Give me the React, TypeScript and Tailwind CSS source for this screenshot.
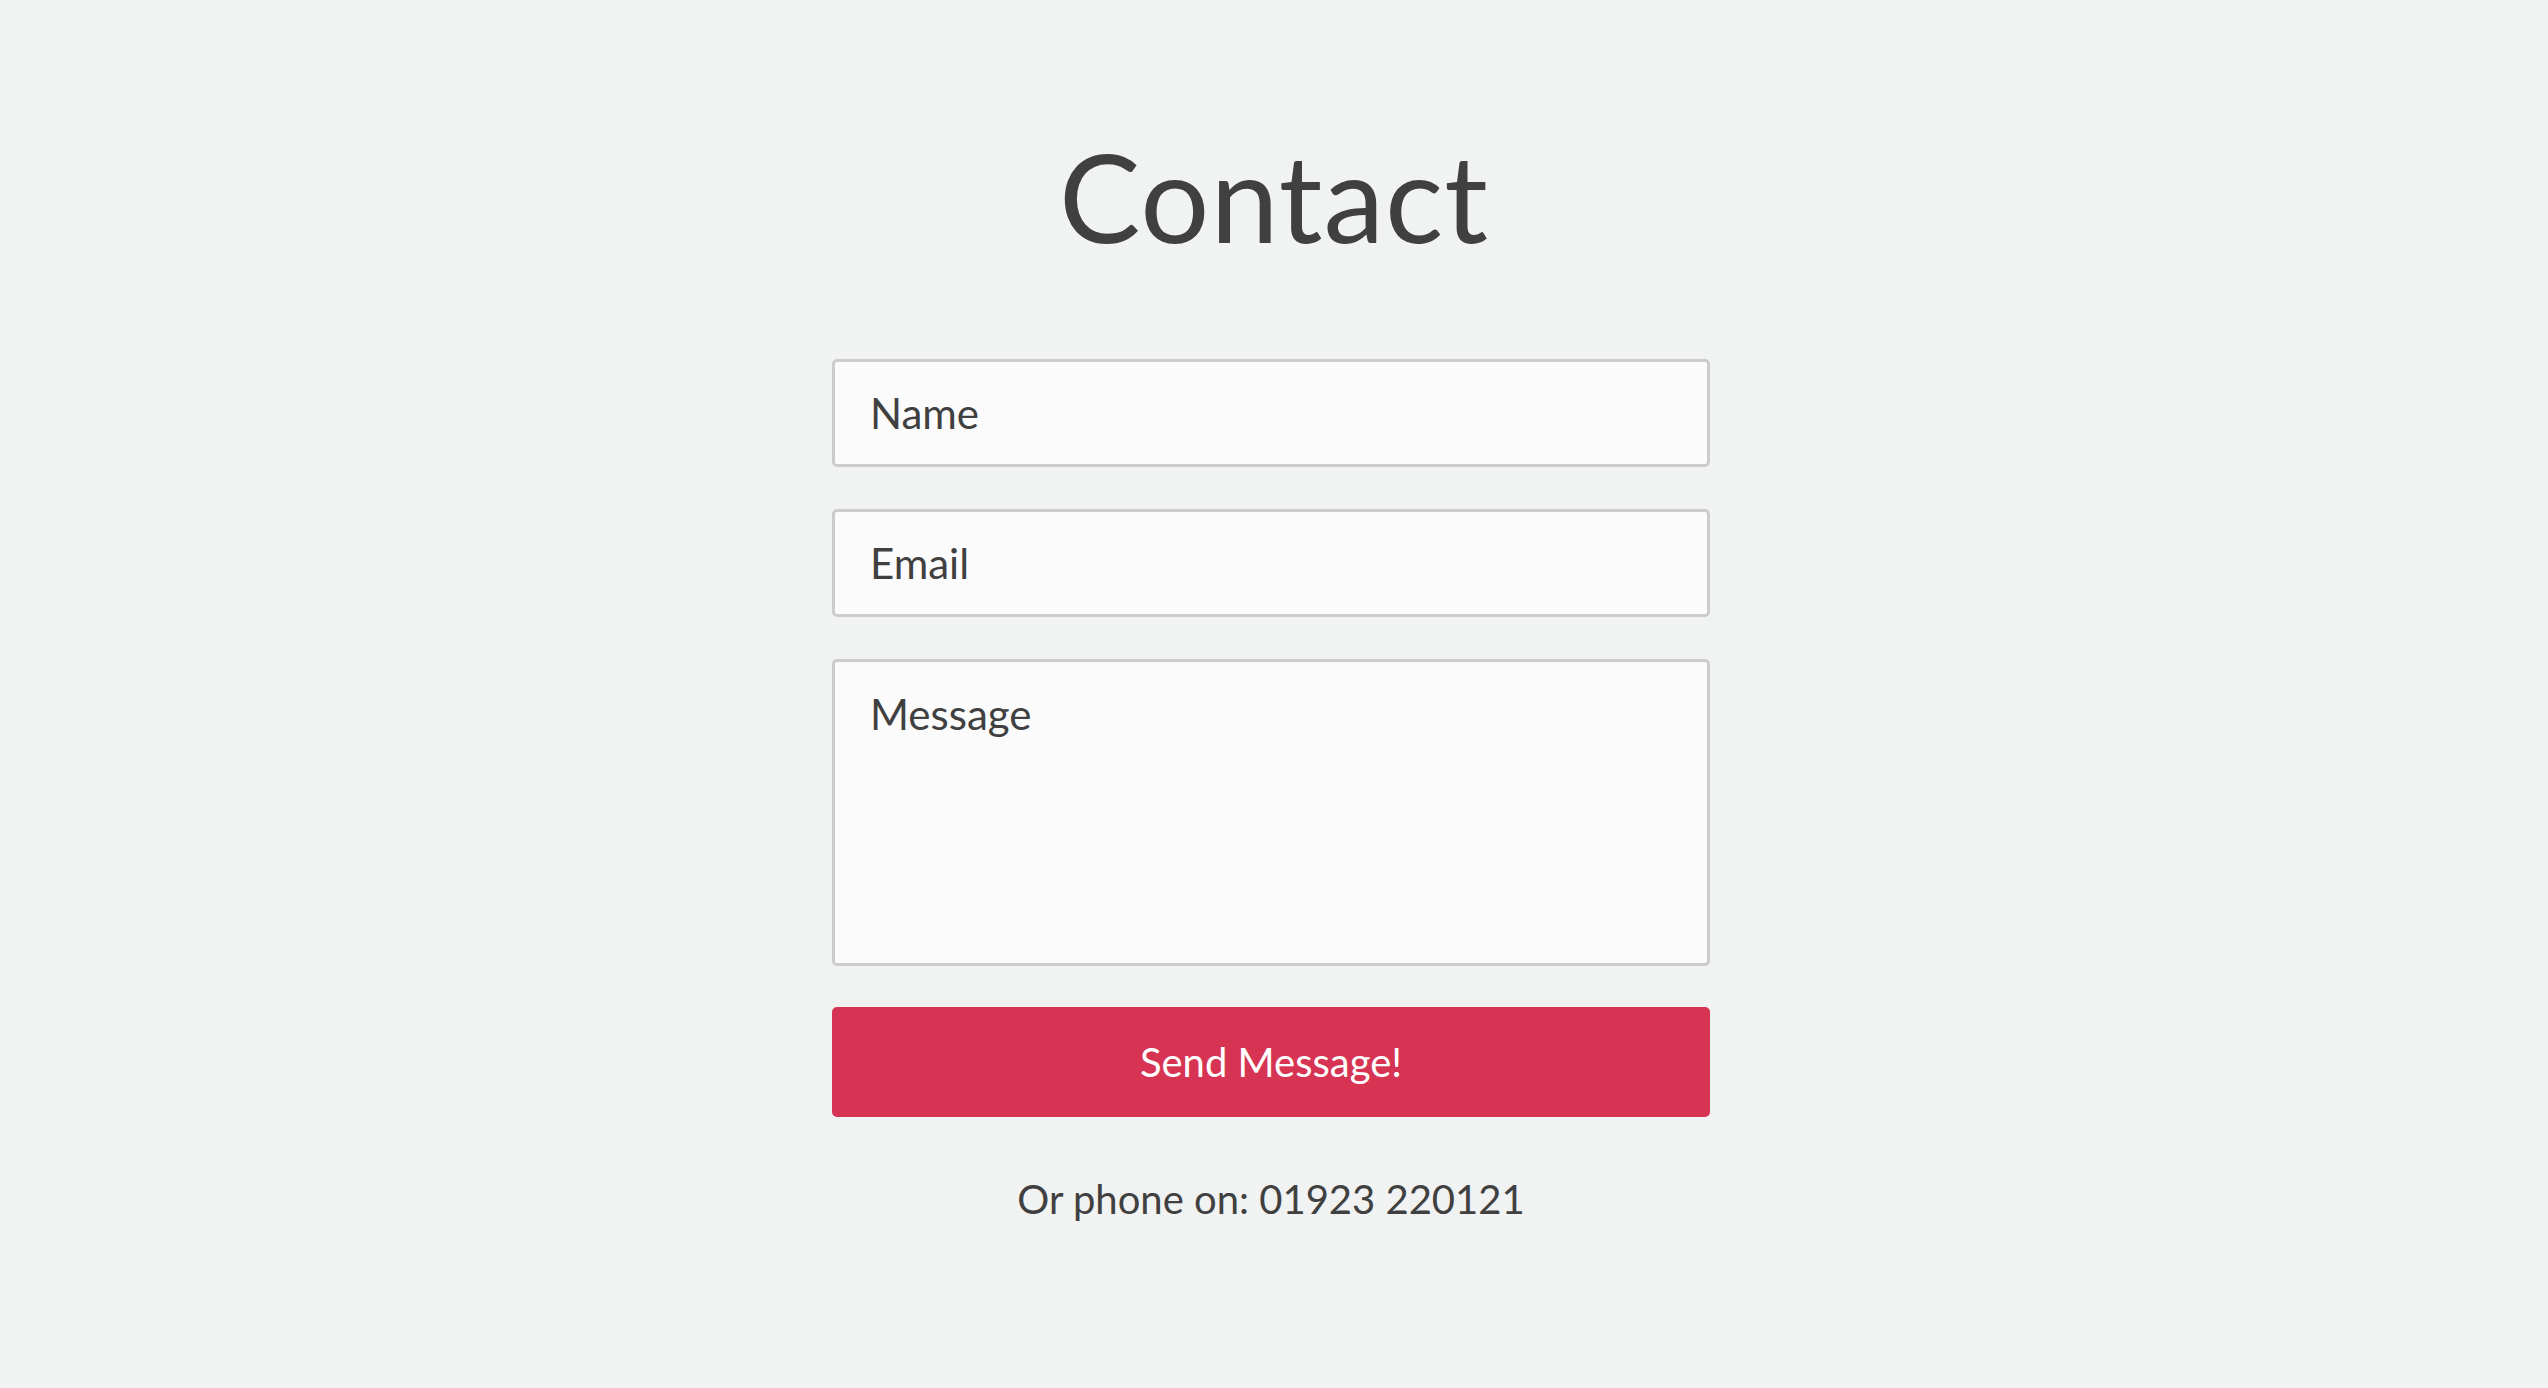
export default function App() {
  return (
    <div className="min-h-screen bg-[#f1f2f2] font-['Lato',sans-serif] text-[#404041]">
      <section className="flex flex-col items-center pt-[135px]">
        <h1 className="text-[122px] leading-[1] font-normal tracking-[1px]">Contact</h1>

        {/* form + phone line */}
        <div className="mt-[102px] mr-[6px] w-[878px] flex flex-col items-center">
          <form className="w-full flex flex-col gap-[42px]">
            <input
              type="text"
              placeholder="Name"
              className="h-[108px] w-full rounded-[5px] border-[3px] border-[#cccccc] bg-[#fbfbfb] px-[35px] text-[42px] placeholder:text-[#404041] outline-none"
            />
            <input
              type="email"
              placeholder="Email"
              className="h-[108px] w-full rounded-[5px] border-[3px] border-[#cccccc] bg-[#fbfbfb] px-[35px] text-[42px] placeholder:text-[#404041] outline-none"
            />
            <textarea
              placeholder="Message"
              className="h-[307px] w-full resize-none rounded-[5px] border-[3px] border-[#cccccc] bg-[#fbfbfb] px-[35px] pt-[22px] text-[42px] leading-[60px] placeholder:text-[#404041] outline-none"
            />
          </form>

          <button className="mt-[41px] h-[110px] w-full rounded-[5px] bg-[#d73453] text-[40px] text-white">
            Send Message!
          </button>

          <p className="mt-[52px] text-[40px]">Or phone on: 01923 220121</p>
        </div>
      </section>
    </div>
  );
}
